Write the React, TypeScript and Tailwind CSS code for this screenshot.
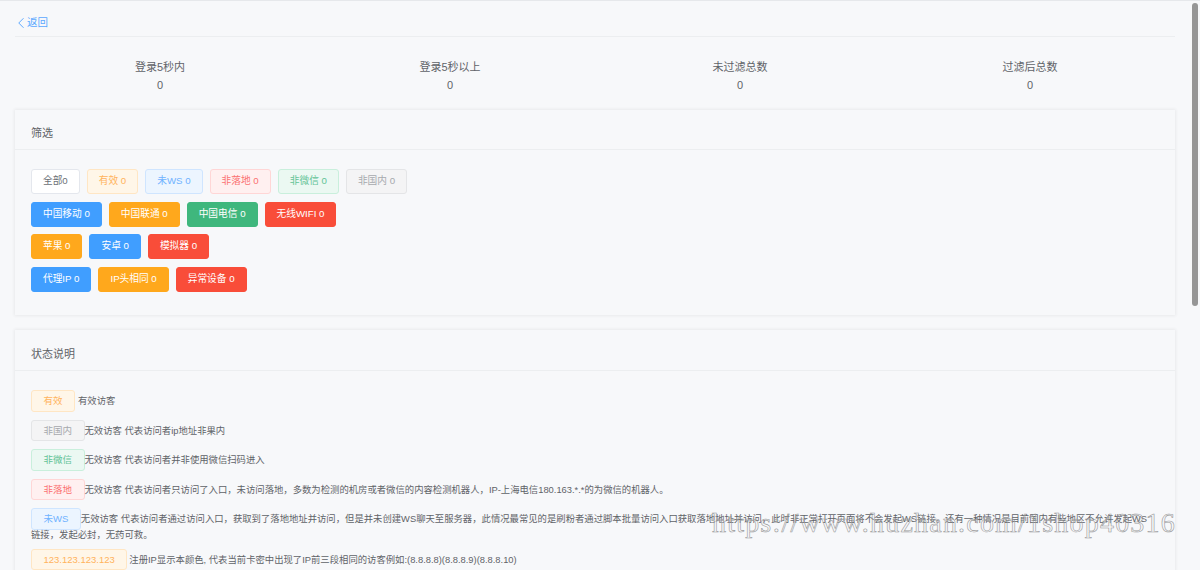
import React from 'react';
import { ChevronLeft } from 'lucide-react';

const base = 'inline-flex h-[25px] items-center whitespace-nowrap rounded-[3px] border px-[11px] text-[9.7px]';

const tones: Record<string, string> = {
  plain: 'border-[#e4e7ed] bg-white text-[#6b6f76]',
  orange: 'border-[#ffe6c4] bg-[#fff6e8] text-[#ffb35c]',
  blue: 'border-[#cfe5ff] bg-[#ecf5ff] text-[#6fb2ff]',
  red: 'border-[#ffd6d6] bg-[#fff0f0] text-[#fb7070]',
  green: 'border-[#c9efdc] bg-[#ebf8f2] text-[#62c396]',
  gray: 'border-[#e4e5e7] bg-[#f4f4f5] text-[#a6a9ad]',
  sBlue: 'border-[#409eff] bg-[#409eff] text-white',
  sOrange: 'border-[#ffa81c] bg-[#ffa81c] text-white',
  sGreen: 'border-[#3fb77d] bg-[#3fb77d] text-white',
  sRed: 'border-[#f94d39] bg-[#f94d39] text-white',
};

const filterRows: [string, string][][] = [
  [['全部0', 'plain'], ['有效 0', 'orange'], ['未WS 0', 'blue'], ['非落地 0', 'red'], ['非微信 0', 'green'], ['非国内 0', 'gray']],
  [['中国移动 0', 'sBlue'], ['中国联通 0', 'sOrange'], ['中国电信 0', 'sGreen'], ['无线WIFI 0', 'sRed']],
  [['苹果 0', 'sOrange'], ['安卓 0', 'sBlue'], ['模拟器 0', 'sRed']],
  [['代理IP 0', 'sBlue'], ['IP头相同 0', 'sOrange'], ['异常设备 0', 'sRed']],
];

const stats = ['登录5秒内', '登录5秒以上', '未过滤总数', '过滤后总数'];

// tag, tone, gap class after the tag, text
const notes: [string, string, string, string][] = [
  ['有效', 'orange', 'ml-[3px]', '有效访客'],
  ['非国内', 'gray', 'ml-0', '无效访客 代表访问者ip地址非果内'],
  ['非微信', 'green', 'ml-0', '无效访客 代表访问者并非使用微信扫码进入'],
  ['非落地', 'red', 'ml-0', '无效访客 代表访问者只访问了入口，未访问落地，多数为检测的机房或者微信的内容检测机器人，IP-上海电信180.163.*.*的为微信的机器人。'],
  ['未WS', 'blue', 'ml-0', '无效访客 代表访问者通过访问入口，获取到了落地地址并访问，但是并未创建WS聊天至服务器，此情况最常见的是刷粉者通过脚本批量访问入口获取落地地址并访问，此时非正常打开页面将不会发起WS链接。还有一种情况是目前国内有些地区不允许发起WS\n链接，发起必封，无药可救。'],
  ['123.123.123.123', 'orange', 'ml-[2px]', '注册IP显示本颜色, 代表当前卡密中出现了IP前三段相同的访客例如:(8.8.8.8)(8.8.8.9)(8.8.8.10)'],
];

const App: React.FC = () => {
  return (
    <div className="relative flex h-[570px] w-[1200px] overflow-hidden border-t border-[#e6e8eb] bg-[#f7f8fa] font-['Liberation_Sans','Noto_Sans_CJK_SC',sans-serif] text-[#5f6368]">
      <div className="w-[1190px] shrink-0 px-[15px]">
        {/* back link */}
        <div className="flex h-[36px] items-center border-b border-[#eceef0] pt-[9px] text-[10.5px] text-[#5ba8ff]">
          <ChevronLeft size={18} strokeWidth={1.3} className="-mx-[3px]" />
          <span>返回</span>
        </div>

        {/* totals */}
        <div className="grid h-[73px] grid-cols-4 content-start pt-[21px] text-center text-[11px] leading-[18px]">
          {stats.map((label) => (
            <div key={label}>
              <div>{label}</div>
              <div>0</div>
            </div>
          ))}
        </div>

        {/* filter card */}
        <section className="h-[205px] shadow-[0_0_3px_1px_rgba(0,0,0,0.06)]">
          <h2 className="flex h-[40px] items-end border-b border-[#eceef0] px-4 pb-[8px] text-[11px] font-normal text-[#606266]">筛选</h2>
          <div className="flex flex-col gap-[7.5px] px-4 pt-[19px]">
            {filterRows.map((row, i) => (
              <div key={i} className="flex gap-[7px]">
                {row.map(([label, tone]) => (
                  <span key={label} className={`${base} ${tones[tone]}`}>{label}</span>
                ))}
              </div>
            ))}
          </div>
        </section>

        {/* status legend */}
        <section className="mt-[15px] h-[300px] shadow-[0_0_3px_1px_rgba(0,0,0,0.06)]">
          <h2 className="flex h-[41px] items-end border-b border-[#eceef0] px-4 pb-[8px] text-[11px] font-normal text-[#606266]">状态说明</h2>
          <div className="whitespace-pre-line px-4 pt-[19px] text-[9.35px] leading-[11px] text-[#5f6368]">
            {notes.map(([tag, tone, gap, text]) => (
              <p key={tag} className="mb-[8px]">
                <span className={`inline-flex h-[21.5px] items-center whitespace-nowrap rounded-[3px] border px-[11.5px] text-[9.5px] ${tones[tone]}`}>{tag}</span>
                <span className={gap}>{text}</span>
              </p>
            ))}
          </div>
        </section>
      </div>

      {/* scrollbar */}
      <div className="flex-1 pt-[2px]">
        <div className="ml-[2px] h-[303px] w-[6px] rounded-[3px] bg-[#969696]" />
      </div>

      {/* watermark */}
      <div className="pointer-events-none absolute left-[712px] top-[501px] whitespace-nowrap font-['Liberation_Serif',serif] text-[28px] tracking-[1.2px] text-transparent [-webkit-text-stroke:0.6px_#9a9a9a]">
        https://www.huzhan.com/1shop40316
      </div>
    </div>
  );
};

export default App;
